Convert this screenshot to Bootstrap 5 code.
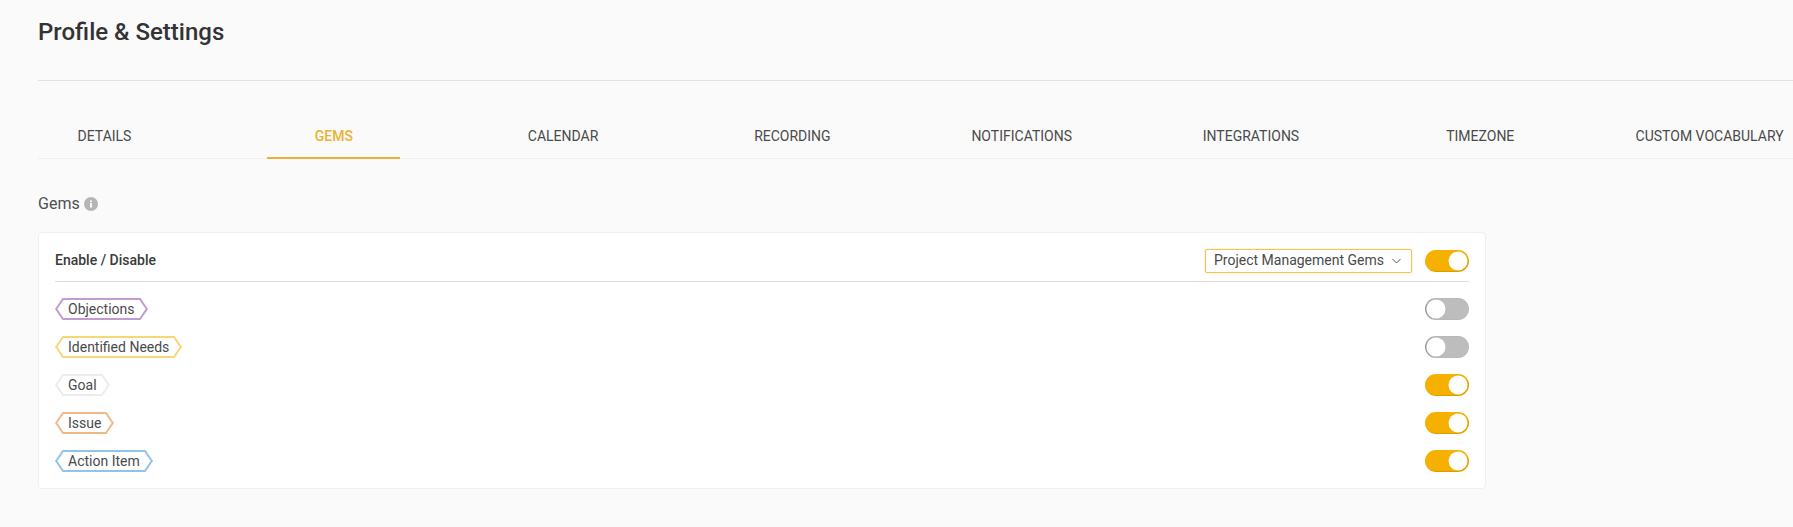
<!DOCTYPE html>
<html lang="en">
<head>
    <meta charset="UTF-8">
    <meta name="viewport" content="width=device-width, initial-scale=1">
    <title>Profile &amp; Settings</title>
    <link href="https://cdn.jsdelivr.net/npm/bootstrap@5.3.2/dist/css/bootstrap.min.css" rel="stylesheet">
    <script src="https://cdn.jsdelivr.net/npm/bootstrap@5.3.2/dist/js/bootstrap.bundle.min.js"></script>
    <style>
        body { background: #fafafa; color: #3a3a3a; font-family: Roboto, "Liberation Sans", sans-serif; font-size: 14px; overflow: hidden; }
        .page-wrap { padding-left: 38px; }
        .page-title { font-size: 24px; font-weight: 500; line-height: 28px; color: #333; margin: 18px 0 34px; }
        .title-rule { height: 1px; background: #e2e2e2; }
        .tab-bar { margin-top: 32px; height: 46px; border-bottom: 1px solid #eeeeee; gap: 96.3px; flex-wrap: nowrap; }
        .tab-bar .nav-link { width: 133px; height: 46px; padding: 0; line-height: 46px; font-size: 14px; color: #4a4a4a; white-space: nowrap; }
        .tab-bar .nav-link.active { color: #ecb133; font-weight: 500; border-bottom: 2px solid #ecb133; }
        .section-label { margin-top: 35px; line-height: 20px; font-size: 16px; color: #4f4f4f; gap: 4px; }
        .info-dot { width: 14px; height: 14px; }
        .gems-card { width: 1448px; margin-top: 18px; height: 257px; border: 1px solid #f0f0f0; border-radius: 4px; background: #fff; padding: 0 16px; }
        .gems-head { height: 49px; padding-top: 7px; border-bottom: 1px solid #dedede; }
        .gems-head b { font-weight: 500; color: #3a3a3a; }
        .head-tools { gap: 13px; }
        .set-picker { width: 207px; height: 24px; padding: 0 10px 0 8px; border: 1px solid #f3c54e; border-radius: 2px; background: #fff; font-size: 14px; color: #4a4a4a; box-shadow: 0 0 2px rgba(243,197,78,.6); }
        .gem-row { height: 38px; }
        .gem-list { padding-top: 16px; }
        .gem-tag { height: 22px; }
        .gem-tag svg { width: 10px; height: 22px; flex: none; }
        .gem-tag span { color: #4a4a4a; border-top: 2px solid var(--gem); border-bottom: 2px solid var(--gem); line-height: 18px; padding: 0 3px; }
        .gem-tag svg polyline { stroke: var(--gem); }
        .gem-purple { --gem: #c19bd1; }
        .gem-yellow { --gem: #f7d676; }
        .gem-grey { --gem: #ececec; }
        .gem-orange { --gem: #f0b98a; }
        .gem-blue { --gem: #91c4e6; }
        .form-switch.gem-switch { padding: 0; margin: 0; min-height: 0; height: 22px; }
        .form-switch.gem-switch .form-check-input { width: 44px; height: 22px; margin: 0; float: none; display: block; border: 0; border-radius: 11px; background-color: #bdbdbd; background-size: 22px 22px; background-position: left center; background-image: url("data:image/svg+xml,%3csvg xmlns='http://www.w3.org/2000/svg' viewBox='0 0 22 22'%3e%3ccircle cx='11' cy='11' r='9.5' fill='%23fff'/%3e%3c/svg%3e"); box-shadow: inset 1px 0 1px rgba(0,0,0,.25); }
        .form-switch.gem-switch .form-check-input:checked { background-color: #f5b000; background-position: right center; box-shadow: inset -1px -1px 1px rgba(170,120,0,.35); }
    </style>
</head>
<body>

    <div class="page-wrap">
        <h1 class="page-title">Profile &amp; Settings</h1>
        <div class="title-rule"></div>

        <ul class="nav tab-bar">
            <li class="nav-item"><a class="nav-link d-flex justify-content-center" href="#">DETAILS</a></li>
            <li class="nav-item"><a class="nav-link d-flex justify-content-center active" href="#">GEMS</a></li>
            <li class="nav-item"><a class="nav-link d-flex justify-content-center" href="#">CALENDAR</a></li>
            <li class="nav-item"><a class="nav-link d-flex justify-content-center" href="#">RECORDING</a></li>
            <li class="nav-item"><a class="nav-link d-flex justify-content-center" href="#">NOTIFICATIONS</a></li>
            <li class="nav-item"><a class="nav-link d-flex justify-content-center" href="#">INTEGRATIONS</a></li>
            <li class="nav-item"><a class="nav-link d-flex justify-content-center" href="#">TIMEZONE</a></li>
            <li class="nav-item"><a class="nav-link d-flex justify-content-center" href="#">CUSTOM VOCABULARY</a></li>
        </ul>

        <div class="section-label d-flex align-items-center">
            Gems
            <svg class="info-dot" viewBox="0 0 14 14">
                <circle cx="7" cy="7" r="7" fill="#b5b5b5"/>
                <rect x="6.1" y="6" width="1.8" height="4.6" fill="#fff"/>
                <rect x="6.1" y="3.4" width="1.8" height="1.7" fill="#fff"/>
            </svg>
        </div>

        <div class="gems-card">
            <div class="gems-head d-flex align-items-center justify-content-between">
                <b>Enable / Disable</b>
                <div class="head-tools d-flex align-items-center">
                    <button type="button" class="set-picker d-flex align-items-center justify-content-between">
                        Project Management Gems
                        <svg width="9" height="6" viewBox="0 0 9 6"><polyline points="0.5,1 4.5,5 8.5,1" fill="none" stroke="#555" stroke-width="1"/></svg>
                    </button>
                    <div class="form-check form-switch gem-switch"><input class="form-check-input" type="checkbox" checked></div>
                </div>
            </div>

            <div class="gem-list" id="gemList"></div>
        </div>
    </div>

    <script>
        let gems = [
            { nome: "Objections", cor: "gem-purple", ligado: false },
            { nome: "Identified Needs", cor: "gem-yellow", ligado: false },
            { nome: "Goal", cor: "gem-grey", ligado: true },
            { nome: "Issue", cor: "gem-orange", ligado: true },
            { nome: "Action Item", cor: "gem-blue", ligado: true }
        ];

        let lista = document.getElementById("gemList");
        gems.forEach(function (g) {
            lista.innerHTML += `
                <div class="gem-row d-flex justify-content-between">
                    <div class="gem-tag d-inline-flex ${g.cor}">
                        <svg viewBox="0 0 10 22"><polyline points="10,1 8,1 1.2,11 8,21 10,21" fill="none" stroke-width="2"/></svg>
                        <span>${g.nome}</span>
                        <svg viewBox="0 0 10 22"><polyline points="0,1 2,1 8.8,11 2,21 0,21" fill="none" stroke-width="2"/></svg>
                    </div>
                    <div class="form-check form-switch gem-switch"><input class="form-check-input" type="checkbox" ${g.ligado ? "checked" : ""}></div>
                </div>`;
        });
    </script>

</body>
</html>
